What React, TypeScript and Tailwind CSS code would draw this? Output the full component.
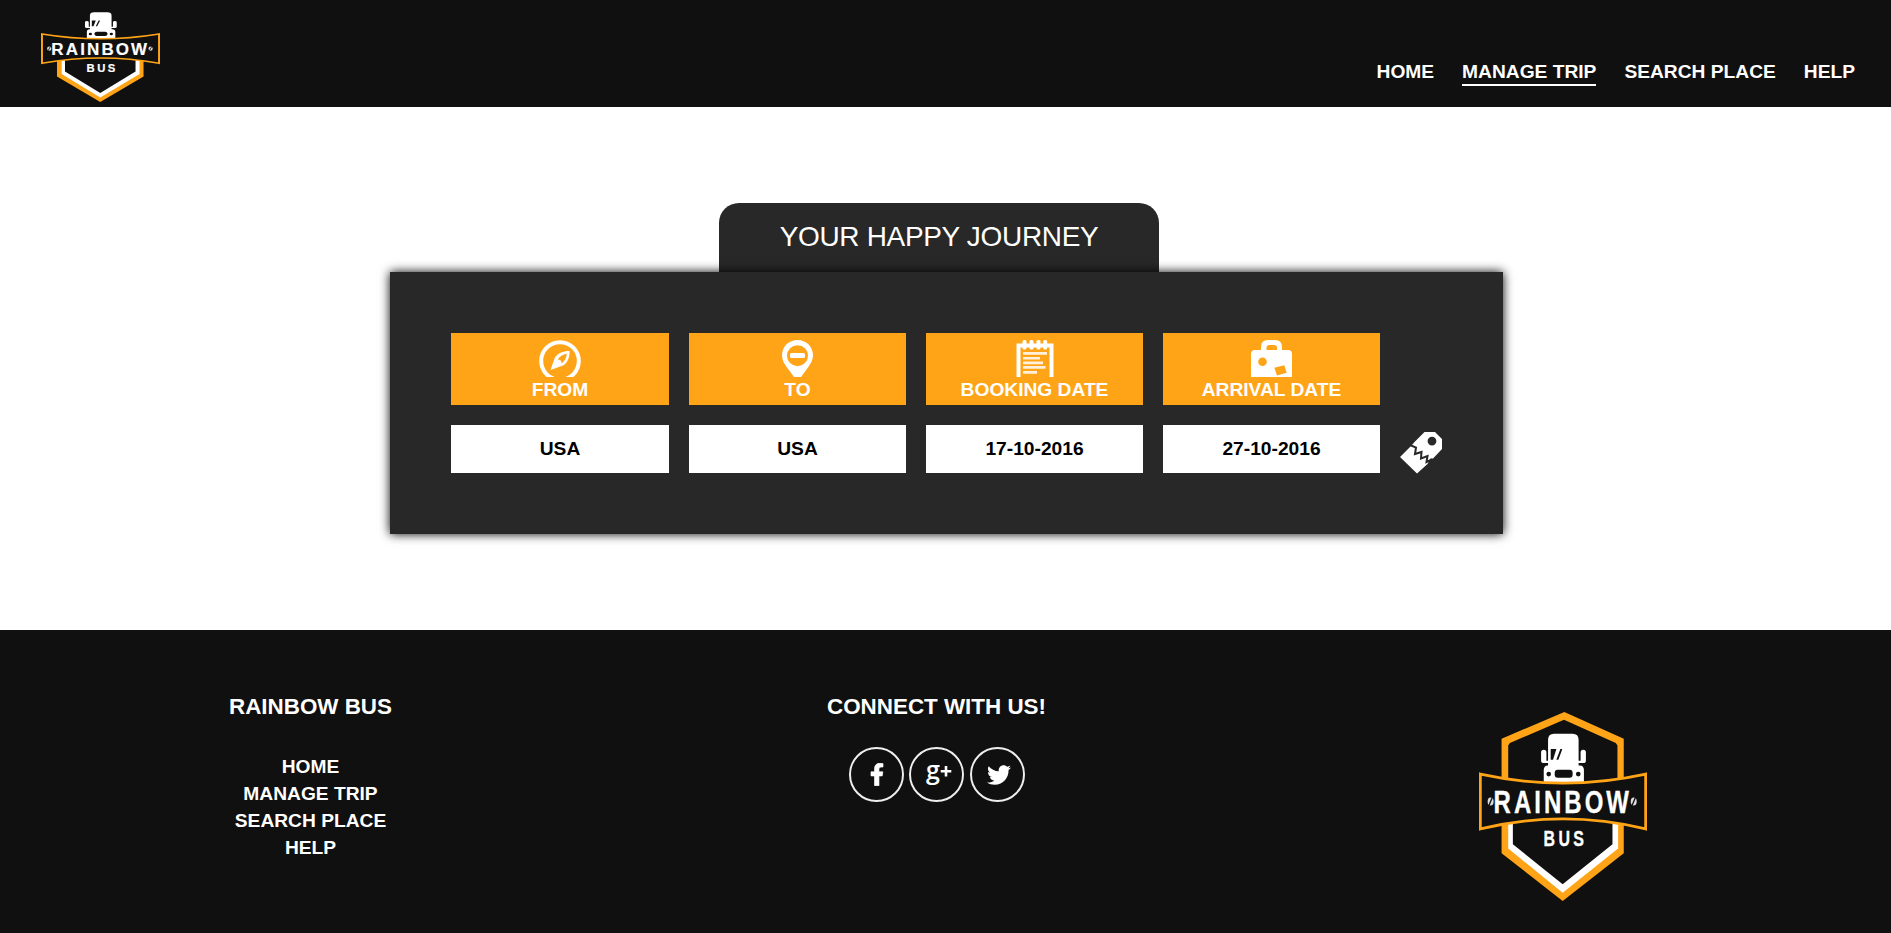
import React from "react";
import { FaFacebookF, FaTwitter } from "react-icons/fa";

const links = ["HOME", "MANAGE TRIP", "SEARCH PLACE", "HELP"];

function Logo({ full = false, className }: { full?: boolean; className: string }) {
  return (
    <svg
      className={className}
      viewBox={full ? "58 37 506 566" : "58 100 506 503"}
      preserveAspectRatio="none"
      role="img"
    >
      {full && (
        <>
          <polygon points="315,37 494,117 494,300 126,300 126,117" fill="#ffa417" />
          <polygon points="314,60 470,130 475,137 475,300 146,300 146,137 151,130" fill="#101010" />
        </>
      )}
      <polygon points="126,340 494,340 494,460 310,603 126,460" fill="#ffa417" />
      <polygon points="146,340 477,340 477,446 310,578 146,446" fill="#fff" />
      <polygon points="160,340 460,340 460,433 310,553 160,433" fill="#101010" />
      <path
        fill="#fff"
        d="M284 102H340Q358 102 358 120V183H364V158Q364 150 372 150Q380 150 380 158V182Q380 190 372 190H358V197H362Q374 197 374 211V262H253V211Q253 197 265 197H266V190H253Q245 190 245 182V158Q245 150 253 150Q261 150 261 158V183H266V120Q266 102 284 102Z"
      />
      <g fill="#101010">
        <rect x="286" y="210" width="54" height="24" rx="9" />
        <circle cx="268" cy="223" r="7" />
        <circle cx="357" cy="223" r="7" />
        <path d="M274 148H291L281 180H274Z" />
        <path d="M303 148H309L297 180H291Z" />
      </g>
      <path d="M62 223Q312 277 560 223V387Q312 327 62 387Z" fill="#101010" stroke="#ffa417" strokeWidth="8.500" />
      <g fill="#fff" stroke="#fff" strokeWidth="1" fontFamily="Liberation Sans, Arial, sans-serif" fontWeight="700">
        <text transform="translate(102 339) scale(.76 1)" fontSize="95" letterSpacing="12">RAINBOW</text>
        <text transform="translate(252 438) scale(.74 1)" fontSize="65" letterSpacing="14">BUS</text>
      </g>
      <ellipse cx="93" cy="305" rx="9" ry="12" fill="#ddd" />
      <path d="M98 293L88 317" stroke="#101010" strokeWidth="4" />
      <ellipse cx="524" cy="305" rx="9" ry="12" fill="#ddd" />
      <path d="M529 293L519 317" stroke="#101010" strokeWidth="4" />
    </svg>
  );
}

const CompassIcon = () => (
  <svg className="h-[37px] w-[42px]" viewBox="0 0 42 37">
    <circle cx="21" cy="21" r="18.800" fill="none" stroke="#fff" strokeWidth="4" />
    <path
      fillRule="evenodd"
      fill="#fff"
      d="M30.500 11C31 17 28.500 23 24 25.500L11.500 30L15.500 18.500C18.500 13 24 11 30.500 11ZM27.800 13.700C24 14.200 20.500 16.500 18.600 19.500C21.500 19.500 22.600 21 22.500 23.500C25.500 21.500 27.500 18 27.800 13.700Z"
    />
  </svg>
);

const PinIcon = () => (
  <svg className="h-[37px] w-[31px]" viewBox="0 0 31 37">
    <path
      fillRule="evenodd"
      fill="#fff"
      d="M15.500 0C24 0 31 6.500 31 15.200C31 20 28.500 24 26 27.500L19 37H12L5 27.500C2.500 24 0 20 0 15.200C0 6.500 7 0 15.500 0ZM15.500 5.200A10.500 10.500 0 1 0 15.500 26.200A10.500 10.500 0 1 0 15.500 5.200Z"
    />
    <rect x="8" y="13" width="15" height="5" rx="1.500" fill="#fff" />
  </svg>
);

const NotepadIcon = () => (
  <svg className="h-[37px] w-[38px]" viewBox="0 0 38 37" fill="#fff">
    <path d="M1 3.500H37.500V37H33.500V7.500H4.500V37H.5V3.500Z" />
    <rect x="6.500" y="0" width="4" height="9.500" rx="1.500" />
    <rect x="13.500" y="0" width="4" height="9.500" rx="1.500" />
    <rect x="20.500" y="0" width="4" height="9.500" rx="1.500" />
    <rect x="27.200" y="0" width="4" height="9.500" rx="1.500" />
    <path d="M7 12h24v2.800H7zM7 17h17v2.500H7zM7 21.500h20v2.800H7zM7 26h22.500v2.800H7zM7 31h14v2.800H7z" opacity=".85" />
  </svg>
);

const SuitcaseIcon = () => (
  <svg className="h-[37px] w-[41px]" viewBox="0 0 41 37">
    <path
      fillRule="evenodd"
      fill="#fff"
      d="M10 10V7Q10 0 17 0H24Q31 0 31 7V10H37Q41 10 41 14V37H0V14Q0 10 4 10ZM15.500 10H26V8Q26 5 23 5H18.500Q15.500 5 15.500 8ZM11.500 17.500A4.300 4.300 0 1 0 11.500 26.100A4.300 4.300 0 1 0 11.500 17.500ZM23.300 27.700L33.300 25.300L35.700 32.700L26 35.500Z"
    />
  </svg>
);

const TagIcon = () => (
  <svg className="h-[42px] w-[42px]" viewBox="0 0 42 42">
    <path
      fillRule="evenodd"
      fill="#fff"
      d="M24.500 0H35L42 7V17L33 26.500L30.500 26.500L27.500 32L17 41.500L0 25L11 14L15 9.500ZM32 4.700A4.400 4.400 0 1 0 32 13.500A4.400 4.400 0 1 0 32 4.700Z"
    />
    <path d="M10 13L16 15.500L15 22L21.500 20L21 26.500L27.500 24L26.500 30L32 27.500" fill="none" stroke="#282828" strokeWidth="2" />
  </svg>
);

const fields = [
  { label: "FROM", value: "USA", Icon: CompassIcon, width: "w-[218px]" },
  { label: "TO", value: "USA", Icon: PinIcon, width: "w-[217px]" },
  { label: "BOOKING DATE", value: "17-10-2016", Icon: NotepadIcon, width: "w-[217px]" },
  { label: "ARRIVAL DATE", value: "27-10-2016", Icon: SuitcaseIcon, width: "w-[217px]" },
];

function Social({ children }: { children: React.ReactNode }) {
  return (
    <a className="flex size-[55px] items-center justify-center rounded-full border-2 border-[#eee] text-white">
      {children}
    </a>
  );
}

export default function App() {
  return (
    <div className="flex h-[933px] w-full flex-col overflow-hidden bg-white font-['Liberation_Sans',Arial,sans-serif] text-[19.2px] font-bold text-white">
      <header className="flex h-[107px] shrink-0 items-start justify-between bg-[#101010] pr-[36px] pl-[41px]">
        <Logo className="mt-[12px] h-[90px] w-[119px]" />
        <nav className="mt-[61px] flex gap-[28px] leading-[22px]">
          {links.map((l) => (
            <a
              key={l}
              className={l === "MANAGE TRIP" ? "h-[25px] border-b-2 border-white" : "h-[25px]"}
            >
              {l}
            </a>
          ))}
        </nav>
      </header>

      <main className="h-[523px] shrink-0 pt-24 pl-[390px]">
        <h1 className="ml-[329px] flex h-[69px] w-[440px] justify-center rounded-t-[20px] bg-[#282828] pt-[18px] text-[28px] leading-8 font-normal tracking-[-0.33px]">
          YOUR HAPPY JOURNEY
        </h1>
        <section className="flex h-[262px] w-[1113px] items-start gap-5 bg-[#282828] p-[61px] shadow-[0_0_10px_#000]">
          {fields.map(({ label, value, Icon, width }) => (
            <div key={label} className={`flex shrink-0 flex-col gap-5 ${width}`}>
              <div className="flex h-[72px] flex-col items-center bg-[#ffa417] pt-[7px] leading-[22px]">
                <Icon />
                <span className="mt-[2px]">{label}</span>
              </div>
              <div className="flex h-12 items-center justify-center bg-white text-black">
                {value}
              </div>
            </div>
          ))}
          <a className="mt-[99px] shrink-0">
            <TagIcon />
          </a>
        </section>
      </main>

      <footer className="grid grow grid-cols-[621px_631px_624px] bg-[#101010] text-center">
        <div className="pt-[64px]">
          <h2 className="text-[22.4px] leading-[26px]">RAINBOW BUS</h2>
          <ul className="mt-[33px] leading-[27px]">
            {links.map((l) => (
              <li key={l}>{l}</li>
            ))}
          </ul>
        </div>
        <div className="pt-[64px]">
          <h2 className="text-[22.4px] leading-[26px]">CONNECT WITH US!</h2>
          <div className="mt-[27px] flex justify-center gap-[5.500px]">
            <Social>
              <FaFacebookF className="ml-0.5 h-[23px] w-[14px] stroke-white stroke-[16px]" />
            </Social>
            <Social>
              <svg className="size-[50px] shrink-0" viewBox="0 0 50 50" fill="#fff" fontFamily="Open Sans, sans-serif">
                <text x="14" y="28.500" fontSize="25" fontWeight="600">g</text>
                <path d="M32.700 16h2.600v4h4v2.600h-4v4h-2.600v-4h-4v-2.600h4z" />
              </svg>
            </Social>
            <Social>
              <FaTwitter className="ml-[3px] size-[24px]" />
            </Social>
          </div>
        </div>
        <div className="flex justify-center pt-[82px]">
          <Logo full className="mr-[2px] h-[189px] w-[168px]" />
        </div>
      </footer>
    </div>
  );
}
